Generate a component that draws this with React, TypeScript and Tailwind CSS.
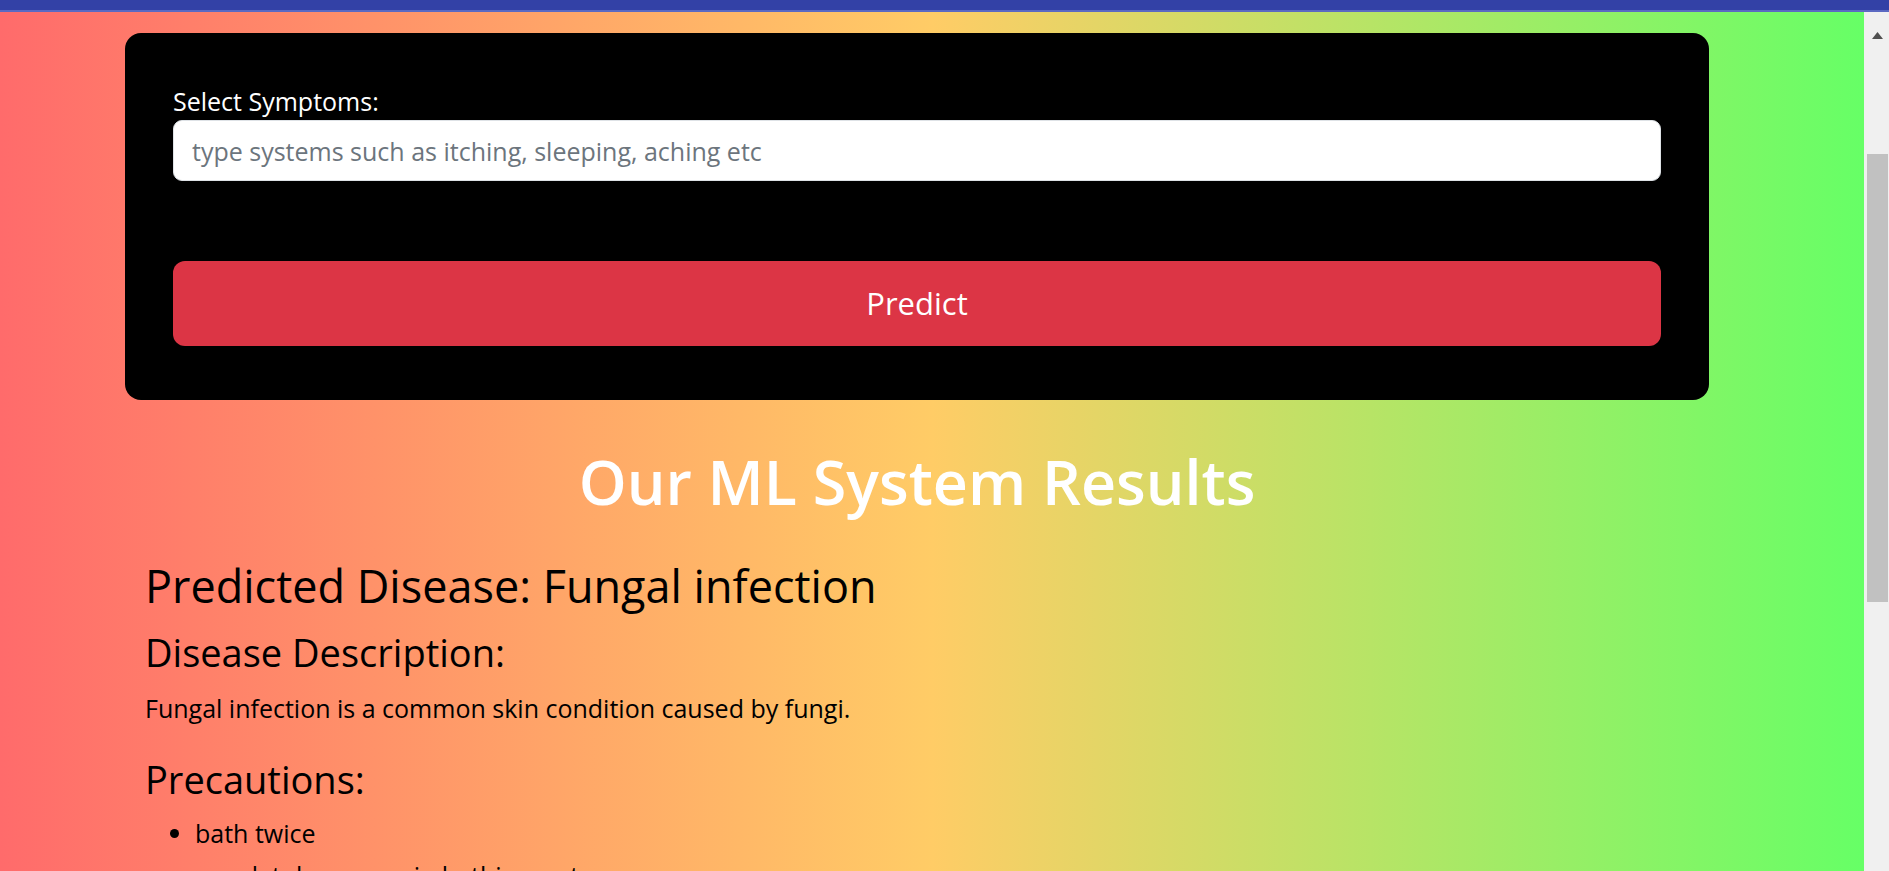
import React from "react";

const precautions = [
  "bath twice",
  "use detol or neem in bathing water",
  "keep infected area dry",
  "use clean cloths",
];

const Scrollbar: React.FC = () => (
  <div className="w-[25px] shrink-0 bg-[#f0f0f0] flex flex-col items-center pl-[1px]">
    <svg width={11} height={7} viewBox="0 0 11 7" className="mt-[20px]">
      <polygon points="5.5,0 11,7 0,7" fill="#505050" />
    </svg>
    <div className="mt-[115px] w-[21px] h-[448px] bg-[#c1c1c1]" />
  </div>
);

export default function App() {
  return (
    <div
      className="w-full h-[871px] overflow-hidden flex flex-col"
      style={{ fontFamily: '"Open Sans", "Noto Sans", sans-serif' }}
    >
      <div className="h-[10px] bg-[#3341a6]" />
      <div className="h-[2px] bg-[#5b69c2]" />
      <div className="flex-1 flex min-h-0">
        <div className="flex-1 min-w-0 overflow-hidden bg-[linear-gradient(to_right,#ff6b6b,#ffcc66,#66ff66)]">
          <div className="ml-[125px] w-[1584px] pt-[21px]">
            <form
              className="bg-black rounded-[16px] px-[48px] pt-[50px] pb-[54px]"
              onSubmit={e => e.preventDefault()}
            >
              <label className="block text-white text-[25px] leading-[37px]">Select Symptoms:</label>
              <input
                type="text"
                placeholder="type systems such as itching, sleeping, aching etc"
                className="block w-full h-[61px] bg-white border border-[#dee2e6] rounded-[9px] px-[18px] text-[25px] text-[#212529] placeholder:text-[#6c757d] outline-none"
              />
              <button
                type="submit"
                className="mt-[80px] w-full h-[85px] bg-[#dc3545] rounded-[12px] text-white text-[31px]"
              >
                Predict
              </button>
            </form>

            <h1 className="mt-[46px] text-center text-white font-semibold text-[61px] leading-[72px]">
              Our ML System Results
            </h1>

            <div className="pl-[20px] text-black">
              <h2 className="mt-[41px] font-medium text-[45px] leading-[54px]">
                Predicted Disease: Fungal infection
              </h2>
              <h3 className="mt-[16px] font-medium text-[38px] leading-[46px]">Disease Description:</h3>
              <p className="mt-[15px] text-[25px] leading-[36px]">
                Fungal infection is a common skin condition caused by fungi.
              </p>
              <h3 className="mt-[30px] font-medium text-[38px] leading-[46px]">Precautions:</h3>
              <ul className="mt-[10px] list-disc pl-[50px] text-[25px] leading-[42px]">
                {precautions.map(p => (
                  <li key={p}>{p}</li>
                ))}
              </ul>
            </div>
          </div>
        </div>
        <Scrollbar />
      </div>
    </div>
  );
}
